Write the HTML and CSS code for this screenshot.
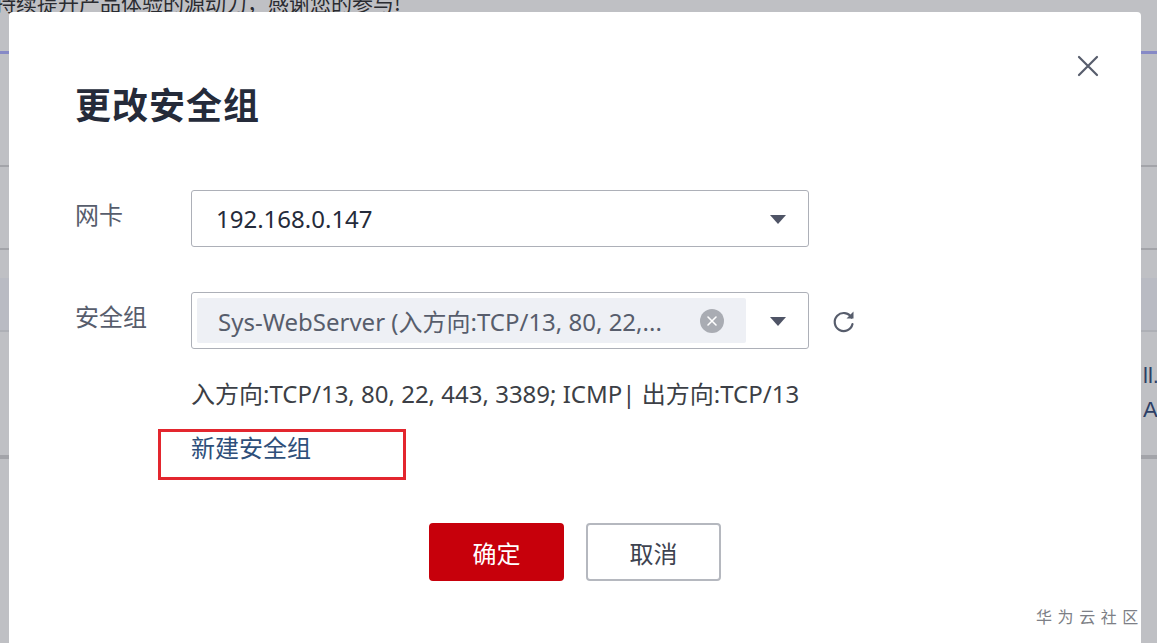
FILE: index.html
```html
<!DOCTYPE html>
<html lang="zh-CN">
<head>
    <meta charset="utf-8">
    <title>更改安全组</title>
    <link rel="stylesheet" href="styles.css">
</head>
<body>

<div class="page">
    <div class="notice">持续提升产品体验的源动力，感谢您的参与!</div>
    <div class="row row-tab"></div>
    <div class="row row-a"></div>
    <div class="row row-b"></div>
    <div class="row row-head"></div>
    <div class="row row-data"><span class="cell">ll.</span><span class="cell">AR</span></div>
    <div class="row row-last"></div>
</div>

<div class="dialog">
    <button class="close" type="button">
        <svg width="22" height="22" viewBox="0 0 22 22"><path d="M2 2L20 20M20 2L2 20" stroke="#575d6c" stroke-width="2.2" stroke-linecap="round" fill="none"/></svg>
    </button>
    <h2 class="title">更改安全组</h2>

    <div class="field">
        <label class="label">网卡</label>
        <div class="select">
            <span class="value">192.168.0.147</span>
            <span class="caret"></span>
        </div>
    </div>

    <div class="field field-sg">
        <label class="label">安全组</label>
        <div class="select">
            <span class="tag">
                <span class="tag-text">Sys-WebServer (入方向:TCP/13, 80, 22,...</span>
                <svg class="tag-clear" width="24" height="24" viewBox="0 0 24 24"><circle cx="12" cy="12" r="12" fill="#a9acb3"/><path d="M8 8L16 16M16 8L8 16" stroke="#fff" stroke-width="1.6" stroke-linecap="round"/></svg>
            </span>
            <span class="caret"></span>
        </div>
        <svg class="refresh" width="26" height="26" viewBox="0 0 26 26"><path d="M20.5 9.5A9 9 0 1 0 21.5 16" stroke="#575d6c" stroke-width="2.2" fill="none" stroke-linecap="round"/><path d="M22.5 3.5V10.5H15.5Z" fill="#575d6c"/></svg>
    </div>

    <div class="desc">入方向:TCP/13, 80, 22, 443, 3389; ICMP| 出方向:TCP/13</div>

    <div class="create">
        <a class="link" href="#">新建安全组<span class="mark"></span></a>
    </div>

    <div class="actions">
        <button class="btn btn-primary" type="button">确定</button>
        <button class="btn" type="button">取消</button>
    </div>
</div>

<div class="watermark">华 为 云 社 区</div>

</body>
</html>
```

FILE: styles.css
```css
* {
    margin: 0;
    padding: 0;
    box-sizing: border-box;
}

body {
    width: 1157px;
    height: 643px;
    overflow: hidden;
    position: relative;
    background: #bfc0c4;
    font-family: "Noto Sans", "Noto Sans CJK SC", sans-serif;
    color: #252b3a;
}

/* page behind the mask */
.page {
    height: 643px;
}

.notice {
    height: 66px;
    margin-top: -12px;
    margin-left: -5px;
    padding-top: 1px;
    font-family: "Noto Sans CJK SC", sans-serif;
    font-size: 21px;
    line-height: 26px;
    color: #2a2b30;
    white-space: nowrap;
    border-bottom: 3px solid #8689c6;
}

.row {
    border-bottom: 2px solid #a3a4a9;
}

.row-tab {
    height: 113px;
}

.row-a {
    height: 83px;
}

.row-b {
    height: 28px;
    border-bottom: 0;
}

.row-head {
    height: 54px;
    background: #b9bbc3;
    border-bottom: 2px solid #aeb0b6;
}

.row-data {
    height: 125px;
    display: flex;
    flex-direction: column;
    align-items: flex-end;
    padding-top: 30px;
    gap: 6px;
    font-family: "Liberation Sans", sans-serif;
    font-size: 22px;
    color: #2c3f66;
}

.cell {
    width: 14px;
    overflow: hidden;
    white-space: nowrap;
    line-height: 28px;
}

/* dialog */
.dialog {
    position: absolute;
    left: 9px;
    top: 12px;
    width: 1132px;
    height: 660px;
    background: #ffffff;
    border-radius: 4px;
    padding: 71px 0 0 66px;
}

.close {
    position: absolute;
    right: 42px;
    top: 43px;
    border: 0;
    background: none;
    width: 22px;
    height: 22px;
}

.title {
    font-size: 36px;
    font-weight: bold;
    line-height: 46px;
    color: #252b3a;
    letter-spacing: 1px;
}

.field {
    display: flex;
    align-items: center;
    margin-top: 61px;
}

.field-sg {
    margin-top: 45px;
}

.label {
    width: 116px;
    font-size: 24px;
    color: #575d6c;
}

.field .label {
    align-self: flex-start;
    padding-top: 6px;
}

.select {
    width: 618px;
    height: 57px;
    border: 1px solid #adb0b8;
    border-radius: 3px;
    display: flex;
    align-items: center;
    padding: 0 22px 0 24px;
    font-size: 24px;
    color: #252b3a;
}

.value {
    flex: 1;
}

.caret {
    width: 0;
    height: 0;
    border-left: 8px solid transparent;
    border-right: 8px solid transparent;
    border-top: 9px solid #4f5466;
    margin-top: 2px;
}

.field-sg .select {
    padding-left: 5px;
}

.tag {
    flex: 1;
    height: 45px;
    margin-right: 24px;
    background: #eef0f5;
    border-radius: 2px;
    display: flex;
    align-items: center;
    padding: 0 22px 0 21px;
    color: #575d6c;
}

.tag-text {
    flex: 1;
    white-space: nowrap;
}

.refresh {
    margin-left: 22px;
    margin-top: 1px;
}

.desc {
    margin: 29px 0 0 116px;
    font-size: 24px;
    line-height: 32px;
    color: #3c3f46;
    white-space: nowrap;
}

.create {
    margin: 22px 0 0 116px;
}

.link {
    position: relative;
    display: inline-block;
    font-size: 24px;
    line-height: 32px;
    color: #2e4f7a;
    text-decoration: none;
}

.mark {
    position: absolute;
    left: -33px;
    top: -3px;
    width: 248px;
    height: 51px;
    border: 3px solid #e3262e;
}

.actions {
    display: flex;
    justify-content: center;
    gap: 22px;
    margin: 59px 0 0 -66px;
}

.btn {
    width: 135px;
    height: 58px;
    border: 2px solid #b5b8bf;
    border-radius: 4px;
    background: #ffffff;
    font-family: "Noto Sans CJK SC", sans-serif;
    font-size: 24px;
    color: #3e4350;
}

.btn-primary {
    background: #c7000b;
    border-color: #c7000b;
    color: #ffffff;
}

.watermark {
    position: absolute;
    left: 1036px;
    top: 604px;
    font-family: "Noto Sans CJK SC", sans-serif;
    font-size: 16px;
    letter-spacing: 1px;
    color: #7d7f86;
    white-space: nowrap;
}
```
